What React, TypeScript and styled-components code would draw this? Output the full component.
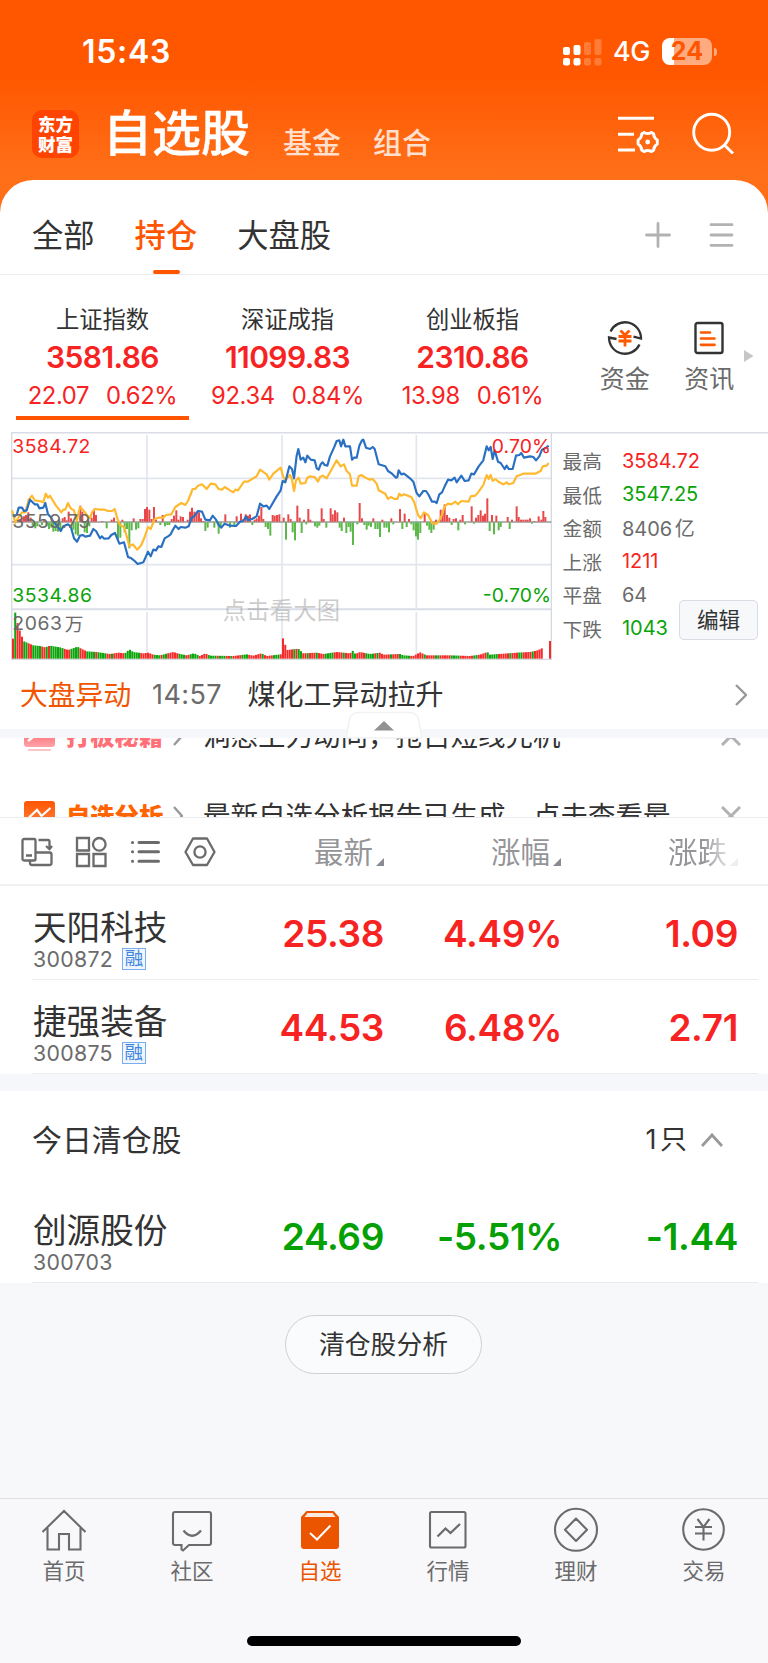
import React from "react";
import styled, { createGlobalStyle } from "styled-components";

const RED = "#f72323";
const GREEN = "#0aa30a";
const ORANGE = "#ff5500";

const GlobalStyle = createGlobalStyle`
  * { box-sizing: border-box; }
  body {
    margin: 0;
    background: #f7f8fa;
    font-family: Inter, "Noto Sans CJK SC", sans-serif;
    color: #333;
    -webkit-font-smoothing: antialiased;
  }
  svg { display: block; flex: none; }
`;

const Screen = styled.div`
  width: 768px;
  height: 1663px;
  display: flex;
  flex-direction: column;
  overflow: hidden;
  background: #f7f8fa;
`;

const Header = styled.header`
  flex: none;
  height: 220px;
  background: linear-gradient(#ff5700 0, #ff5700 76px, #ff6f18 172px, #ff6f18 100%);
`;

const StatusBar = styled.div`
  height: 103px;
  padding: 0 51px 0 82px;
  display: flex;
  align-items: center;
  color: #fff;
`;

const Clock = styled.span`
  flex: 1;
  font-size: 32px;
  line-height: 40px;
  font-weight: 600;
  letter-spacing: 0.7px;
`;

const Network = styled.span`
  margin: 1px 12px 0 11px;
  width: 37px;
  font-size: 27px;
  line-height: 34px;
  font-weight: 500;
  letter-spacing: -0.4px;
`;

const Battery = styled.span`
  display: flex;
  align-items: center;
  justify-content: center;
  width: 50px;
  height: 27px;
  border-radius: 8px;
  background: linear-gradient(90deg, #fff 24%, #ffab80 24%);
  color: ${ORANGE};
  font-size: 25px;
  line-height: 27px;
  font-weight: 700;
`;

const BatteryTip = styled.span`
  width: 3px;
  height: 8px;
  margin: 0 0 0 2px;
  border-radius: 0 4px 4px 0;
  background: #ffab80;
`;

const TitleBar = styled.div`
  height: 77px;
  padding: 0 34px 0 32px;
  display: flex;
  align-items: flex-start;
  color: #fff;
`;

const Logo = styled.div`
  width: 47px;
  height: 48px;
  margin-top: 7px;
  padding-top: 4px;
  border-radius: 10px;
  background: #ff4300;
  font-family: "Noto Sans CJK SC", sans-serif;
  font-weight: 900;
  font-size: 17.5px;
  line-height: 20px;
  text-align: center;
  white-space: pre-line;
`;

const PageTitle = styled.h1`
  margin: 0 0 0 24px;
  width: 149px;
  font-size: 49px;
  line-height: 62px;
  font-weight: 500;
  white-space: nowrap;
  -webkit-text-stroke: 0.4px #fff;
`;

const TitleLink = styled.span`
  margin: 21px 0 0 31px;
  width: 59px;
  font-size: 29px;
  line-height: 40px;
  font-weight: 500;
  color: #ffdfcd;
`;

const HeaderIcons = styled.div`
  margin-left: auto;
  padding-top: 9px;
  display: flex;
  gap: 32px;
`;

const Panel = styled.main`
  flex: none;
  margin-top: -40px;
  background: #fff;
  border-radius: 33px 33px 0 0;
`;

const GroupTabs = styled.nav`
  height: 95px;
  padding: 0 34px 0 32px;
  display: flex;
  align-items: center;
  border-bottom: 1px solid #ececee;
`;

const GroupTab = styled.span<{ $active?: boolean }>`
  position: relative;
  margin: 17px 40px 0 0;
  font-size: 31.3px;
  line-height: 44px;
  font-weight: ${(p) => (p.$active ? 500 : 400)};
  color: ${(p) => (p.$active ? ORANGE : "#333")};
  ${(p) =>
    p.$active &&
    `&::after {
      content: "";
      position: absolute;
      left: 18px;
      top: 56px;
      width: 27px;
      height: 4px;
      border-radius: 2px;
      background: ${ORANGE};
    }`}
`;

const TabTools = styled.div`
  margin: 15px 0 0 auto;
  display: flex;
  align-items: center;
  gap: 38px;
`;

const IndexStrip = styled.section`
  height: 157px;
  padding: 0 0 0 10px;
  display: flex;
`;

const IndexCard = styled.div<{ $active?: boolean }>`
  width: 185px;
  padding: 31px 0 0;
  display: flex;
  flex-direction: column;
  align-items: center;
  &::after {
    content: "";
    width: 173px;
    height: 4px;
    margin-top: 6px;
    background: ${(p) => (p.$active ? ORANGE : "transparent")};
  }
`;

const IndexName = styled.span`
  font-size: 23.3px;
  line-height: 28px;
`;

const IndexValue = styled.span`
  margin-top: 5px;
  font-size: 30px;
  line-height: 36px;
  font-weight: 600;
  letter-spacing: -0.6px;
  color: ${RED};
`;

const IndexChange = styled.span`
  margin-top: 7px;
  display: flex;
  gap: 17px;
  font-size: 23.8px;
  line-height: 28px;
  letter-spacing: -0.4px;
  color: ${RED};
`;

const Shortcuts = styled.div`
  margin-left: 17.5px;
  display: flex;
`;

const Shortcut = styled.div`
  width: 84.5px;
  padding-top: 45px;
  display: flex;
  flex-direction: column;
  align-items: center;
  gap: 8px;
  font-size: 25px;
  line-height: 30px;
  color: #6b6b6b;
`;

const MoreArrow = styled.svg`
  margin: 75px 0 0 -8px;
`;

const MarketPane = styled.section`
  height: 229px;
  padding-left: 11px;
  display: flex;
  background: linear-gradient(#d9dce6, #d9dce6) 11px 0 / 757px 1.5px no-repeat;
`;

const Stats = styled.div`
  padding: 12px 0 0 10.5px;
  width: 117px;
  flex: none;
`;

const StatRow = styled.div<{ $color: string }>`
  display: flex;
  align-items: center;
  height: 33.5px;
  font-size: 19.7px;
  white-space: nowrap;
  color: #6b6b6b;
  & > span:last-child {
    margin-left: 20px;
    font-size: 20px;
    word-spacing: -3px;
    color: ${(p) => p.$color};
  }
`;

const EditButton = styled.button`
  align-self: flex-end;
  margin: 0 10px 21px auto;
  width: 79px;
  height: 40px;
  padding: 0;
  border: 1.5px solid #d9dce2;
  border-radius: 5px;
  background: #f7f8fa;
  font: 400 21.6px/36px Inter, "Noto Sans CJK SC", sans-serif;
  color: #333;
`;

const NewsRow = styled.section`
  height: 68px;
  padding: 0 21px 1px 20px;
  display: flex;
  align-items: center;
  font-size: 28px;
  line-height: 36px;
  white-space: nowrap;
  & > svg { margin-left: auto; }
`;

const NewsTag = styled.span`
  width: 111px;
  font-size: 27.8px;
  color: #f25500;
`;

const NewsTime = styled.span`
  margin-left: 21px;
  width: 95.5px;
  font-size: 27px;
  letter-spacing: 0.4px;
  color: #6b6b6b;
`;

const Divider = styled.div<{ $height: number }>`
  position: relative;
  height: ${(p) => p.$height}px;
  background: #f5f7fa;
`;

const Collapse = styled.svg`
  position: absolute;
  left: 345px;
  top: -18px;
`;

const PromoList = styled.section`
  height: 79px;
  overflow: hidden;
`;

const PromoInner = styled.div`
  margin-top: -42px;
`;

const Promo = styled.div`
  height: 80px;
  padding: 0 27px 0 24px;
  display: flex;
  align-items: center;
  font-size: 27.5px;
  line-height: 36px;
  white-space: nowrap;
  & > svg:last-child { margin-left: auto; }
`;

const PromoTag = styled.span<{ $color: string }>`
  margin: 0 10px 0 11px;
  width: 97px;
  font-size: 24.3px;
  font-weight: 900;
  color: ${(p) => p.$color};
`;

const PromoText = styled.span`
  margin-left: 20px;
`;

const ColumnBar = styled.section`
  height: 69px;
  padding: 1px 0 0 21px;
  display: flex;
  align-items: center;
  border-top: 1px solid #ececee;
  border-bottom: 2px solid #f1f1f3;
`;

const ViewTools = styled.div`
  width: 226px;
  display: flex;
  gap: 22.3px;
  align-items: center;
`;

const ColumnHead = styled.div<{ $width: number; $faded?: boolean }>`
  width: ${(p) => p.$width}px;
  display: flex;
  justify-content: flex-end;
  align-items: flex-end;
  gap: 3px;
  padding-top: 1px;
  font-size: 29.5px;
  line-height: 36px;
  color: #959599;
  & > svg { margin-bottom: 4px; }
  ${(p) => p.$faded && "mask-image: linear-gradient(90deg, #000 80%, rgba(0,0,0,.15) 97%);"}
`;

const StockRow = styled.div`
  height: 94px;
  margin: 0 10px 0 32px;
  padding-right: 20px;
  display: flex;
  border-bottom: 1.5px solid #ececee;
`;

const StockId = styled.div`
  width: 151px;
  padding: 21px 0 0 1px;
`;

const StockName = styled.div`
  font-size: 33.6px;
  line-height: 42px;
  white-space: nowrap;
`;

const StockCode = styled.div`
  display: flex;
  align-items: center;
  height: 20px;
  gap: 9px;
  font-size: 21.3px;
  color: #6b6b6b;
  letter-spacing: 0.3px;
`;

const MarginBadge = styled.span`
  width: 24px;
  height: 22px;
  border: 1.5px solid #78aef0;
  background: #eff6fe;
  color: #3f86dd;
  font-size: 18.5px;
  line-height: 19px;
  text-align: center;
  letter-spacing: 0;
`;

const Figure = styled.span<{ $width: number; $up: boolean }>`
  width: ${(p) => p.$width}px;
  padding-top: 24px;
  font-size: 37px;
  line-height: 48px;
  font-weight: 600;
  text-align: right;
  letter-spacing: -0.35px;
  color: ${(p) => (p.$up ? RED : "#04a004")};
`;

const SectionHead = styled.div`
  height: 98px;
  padding: 0 45px 0 32px;
  display: flex;
  align-items: center;
  justify-content: space-between;
  font-size: 29.9px;
  line-height: 40px;
`;

const SectionCount = styled.span`
  display: flex;
  align-items: center;
  gap: 14px;
  font-size: 27px;
  word-spacing: -4px;
`;

const Filler = styled.div`
  flex: 1;
  padding-top: 32px;
  display: flex;
  justify-content: center;
  align-items: flex-start;
`;

const AnalysisButton = styled.button`
  width: 197px;
  height: 59px;
  margin-right: 1px;
  padding: 0;
  border: 1.5px solid #cfd0d4;
  border-radius: 30px;
  background: #fafbfc;
  font: 400 25.8px/56px Inter, "Noto Sans CJK SC", sans-serif;
  color: #333;
`;

const TabBar = styled.nav`
  flex: none;
  height: 165px;
  border-top: 1.5px solid #dfe0e3;
  background: #f8f8fb;
  display: flex;
  flex-direction: column;
  justify-content: space-between;
  align-items: center;
`;

const TabItems = styled.div`
  width: 100%;
  display: flex;
`;

const TabItem = styled.div<{ $active?: boolean }>`
  flex: 1;
  padding-top: 10px;
  display: flex;
  flex-direction: column;
  align-items: center;
  gap: 1px;
  font-size: 21.5px;
  line-height: 30px;
  color: ${(p) => (p.$active ? "#ec5500" : "#6b6b6b")};
  & > svg { overflow: visible; }
`;

const HomeIndicator = styled.div`
  width: 274px;
  height: 10px;
  margin-bottom: 17px;
  border-radius: 5px;
  background: #000;
`;

/* Intraday series, in thirds of a pixel from the pane's origin. */
const INDEX_LINE =
  "38,272 50,270 56,248 66,248 72,258 80,256 90,224 104,238 112,238 118,250 130,248 136,234 144,268 152,276 160,290 170,300 182,318 190,304 204,298 212,304 222,340 231,350 240,332 248,330 256,335 270,332 280,312 288,318 300,340 306,334 312,341 326,340 334,330 345,324 358,356 372,352 384,396 394,400 404,408 413,417 430,412 444,380 452,394 460,374 468,376 475,364 484,366 494,340 504,334 512,328 518,316 526,302 536,312 542,306 556,308 566,304 574,280 584,272 594,258 606,260 616,284 630,286 638,272 648,284 656,300 664,308 674,296 690,302 708,303 720,290 730,288 738,274 744,286 756,282 770,274 780,236 790,244 800,242 808,252 830,214 842,196 848,168 856,172 868,124 876,132 882,160 890,92 895,72 902,104 910,98 916,112 922,92 932,104 944,106 950,130 956,134 962,118 968,112 974,120 982,122 990,94 1002,68 1010,48 1018,46 1023,64 1030,44 1036,64 1050,64 1056,104 1062,98 1070,98 1078,62 1086,46 1090,44 1098,68 1110,72 1118,66 1124,72 1136,118 1156,124 1164,138 1176,146 1188,158 1192,156 1196,136 1204,148 1212,146 1230,160 1240,170 1250,204 1258,214 1270,198 1278,198 1286,210 1296,230 1304,230 1310,234 1318,208 1326,202 1334,184 1344,164 1354,166 1364,158 1370,172 1384,152 1394,168 1406,166 1414,146 1422,148 1436,124 1450,106 1460,64 1466,76 1472,66 1478,102 1484,76 1494,110 1502,114 1514,132 1520,122 1526,132 1538,132 1548,92 1558,90 1564,84 1572,98 1590,94 1600,96 1608,106 1618,94 1626,74 1636,70 1646,62";

const LEAD_LINE =
  "36,256 46,294 56,276 66,262 76,262 86,224 96,212 104,226 118,228 130,232 137,206 144,218 150,212 158,226 168,242 184,262 190,254 196,254 204,234 212,250 222,256 230,288 240,246 250,256 258,266 270,280 276,262 284,252 300,254 314,254 324,258 336,258 344,252 352,280 360,300 372,306 382,340 388,364 398,358 412,374 424,360 434,336 444,306 452,312 464,282 476,278 490,278 498,270 514,268 526,246 544,234 556,240 564,228 578,192 586,192 594,182 606,178 620,192 632,176 646,178 656,192 666,194 674,186 690,196 700,202 706,194 714,196 732,170 744,170 756,162 770,154 780,134 800,148 808,164 820,146 842,128 850,156 856,166 870,150 876,164 882,198 888,166 896,158 902,176 916,174 922,158 930,154 944,156 954,170 960,156 968,152 980,160 990,142 1002,120 1010,106 1022,124 1032,118 1040,138 1050,148 1056,182 1070,182 1076,154 1084,150 1100,160 1110,164 1118,162 1130,176 1136,196 1156,206 1164,222 1172,216 1184,222 1192,222 1198,206 1204,212 1212,208 1234,216 1242,230 1254,270 1262,280 1272,262 1284,270 1298,296 1310,296 1322,280 1334,244 1344,236 1354,238 1366,230 1374,238 1384,228 1406,230 1412,214 1426,212 1436,200 1450,180 1460,150 1466,162 1472,150 1478,168 1486,162 1498,172 1510,178 1520,172 1526,178 1540,174 1550,154 1570,146 1606,146 1622,138 1628,124 1640,122 1646,114";

const MOMENTUM: number[][] = [
  [58, 8], [65, 12], [72, 16], [78, 20], [85, 28], [92, 12], [98, -10], [106, -18], [112, -12], [126, -8], [133, 8],
  [140, -12], [147, -20], [154, -16], [160, -28], [167, -26], [174, -28], [181, -20], [188, 10], [194, 14], [200, 4],
  [206, 30], [213, 10], [220, -22], [227, -36], [234, -40], [241, 48], [247, 30], [254, -30], [261, -32], [268, -12],
  [275, 12], [282, 34], [288, 20], [307, 2], [320, -18], [335, 6], [342, 12], [354, -50], [361, -46], [367, 6],
  [374, -30], [381, -20], [388, -78], [395, -24], [401, 10], [408, -22], [415, -18], [421, 8], [428, 8], [435, 38],
  [441, 44], [448, 36], [455, 8], [462, 44], [468, 6], [481, -8], [488, 20], [495, -12], [502, -8], [508, -8],
  [515, 8], [522, 18], [529, 34], [535, 6], [542, 16], [549, 14], [563, 6], [570, 30], [576, 42], [583, 30],
  [590, 28], [597, 28], [603, 10], [610, 2], [616, -26], [623, -16], [643, -16], [656, -34], [662, -14], [676, 22],
  [690, -16], [703, -14], [710, 16], [723, 24], [730, 8], [737, 22], [744, 18], [750, 22], [757, -8], [764, 6],
  [770, 10], [777, 18], [784, 44], [790, 8], [797, -14], [804, -20], [811, -40], [818, 20], [824, 18], [831, 20],
  [838, 22], [851, 12], [858, -52], [865, 22], [872, 8], [878, -30], [885, -54], [892, 48], [899, 12], [905, -32],
  [912, 6], [919, -6], [925, 38], [931, 6], [945, -12], [952, -16], [958, -10], [965, 40], [971, 8], [979, -16],
  [992, 40], [998, 22], [1005, 34], [1012, 28], [1019, -16], [1025, -26], [1032, 12], [1039, -32], [1046, -14],
  [1052, -28], [1059, -68], [1072, -6], [1079, 56], [1086, 10], [1093, -8], [1100, -22], [1106, -10], [1113, -14],
  [1120, 10], [1126, -20], [1133, -20], [1140, -44], [1147, 6], [1153, -16], [1160, -16], [1167, -30], [1174, 10],
  [1180, -6], [1200, 38], [1207, -20], [1214, 24], [1220, -14], [1227, 8], [1234, -6], [1241, -24], [1248, -42],
  [1254, -52], [1261, -32], [1274, 26], [1281, -10], [1288, -22], [1294, -32], [1301, -22], [1308, 6], [1322, 36],
  [1328, 26], [1334, 52], [1341, 20], [1348, 12], [1355, -8], [1361, 8], [1368, 10], [1375, -24], [1381, 6],
  [1388, 20], [1395, -6], [1415, 46], [1422, -4], [1428, 12], [1435, 20], [1442, 34], [1449, 18], [1455, 24],
  [1462, 70], [1469, -26], [1476, 20], [1482, -36], [1489, 18], [1496, -24], [1502, -14], [1523, 14], [1529, -20],
  [1536, 6], [1550, 46], [1556, 14], [1563, 6], [1570, 6], [1577, 6], [1583, 6], [1590, 10], [1596, -4], [1603, 2],
  [1616, 16], [1624, 6], [1630, 32], [1636, 14],
];

/* Volume envelope as [x, height]; colours as run lengths, rising first. */
const VOLUME: number[][] = [
  [39, 60], [46, 141], [53, 104], [60, 82], [66, 66], [72, 52], [86, 46], [100, 40], [120, 38], [135, 34], [150, 39],
  [180, 34], [205, 26], [232, 36], [260, 22], [290, 20], [330, 14], [355, 18], [375, 16], [388, 28], [400, 20],
  [430, 16], [445, 18], [460, 12], [480, 10], [520, 20], [540, 14], [560, 10], [582, 16], [600, 8], [616, 16],
  [630, 9], [700, 8], [740, 13], [760, 9], [784, 16], [800, 8], [843, 13], [846, 16], [850, 76], [856, 40], [862, 26],
  [895, 30], [910, 16], [950, 18], [970, 14], [1010, 20], [1050, 16], [1059, 24], [1066, 14], [1080, 20], [1110, 14],
  [1140, 18], [1150, 12], [1200, 14], [1210, 10], [1240, 8], [1260, 19], [1280, 10], [1350, 10], [1410, 8], [1440, 12],
  [1462, 20], [1470, 12], [1550, 18], [1590, 20], [1610, 24], [1630, 33],
];
const VOLUME_RUNS = [
  1, 1, 3, 2, 2, 4, 2, 1, 1, 6, 3, 4, 3, 4, 1, 4, 2, 1, 5, 7, 6, 3, 1, 2, 5, 3, 2, 4, 4, 4, 1, 3, 2, 1, 4, 3, 6, 1,
  4, 3, 6, 1, 1, 2, 2, 1, 3, 1, 3, 4, 4, 1, 3, 2, 4, 4, 1, 1, 5, 1, 3, 5, 6, 1, 4, 2, 5, 4, 6, 2, 4, 5, 5, 1, 3, 2, 4,
  1, 6, 2, 3, 1, 2, 3, 6, 1, 40,
];

function volumeAt(x: number) {
  const next = VOLUME.findIndex((p) => p[0] >= x);
  if (next <= 0) return VOLUME[next === 0 ? 0 : VOLUME.length - 1][1];
  const [x0, h0] = VOLUME[next - 1];
  const [x1, h1] = VOLUME[next];
  return h0 + ((h1 - h0) * (x - x0)) / (x1 - x0);
}

const volumeBars: { x: number; h: number; up: boolean }[] = [];
{
  let run = 0;
  let left = VOLUME_RUNS[0];
  for (let i = 0; i < 236; i++) {
    const x = 39 + i * 6.75;
    if (left === 0) {
      run += 1;
      left = VOLUME_RUNS[run] ?? 99;
    }
    volumeBars.push({ x, h: volumeAt(x), up: run % 2 === 0 });
    left -= 1;
  }
  volumeBars.push({ x: 1650, h: 53, up: true });
}

const IntradayChart = () => (
  <svg width="541" height="228" viewBox="33 21 1623 684" fontFamily='Inter, "Noto Sans CJK SC", sans-serif'>
    <g fill="none" stroke="#e2e5ee" strokeWidth="5">
      <path d="M36 160H1654M36 419H1654" />
      <path d="M441 30V548M846 30V548M1249 30V548M441 560V700M846 560V700M1249 560V700" />
      <path d="M36 553H1654" stroke="#d9dde6" strokeWidth="6" />
      <path d="M35 23V703H1654V23" stroke="#d5d9e0" strokeWidth="4" />
    </g>
    <path d="M36 291H1654" stroke="#999" strokeWidth="4" />
    {MOMENTUM.map(([x, v]) => (
      <rect
        key={x}
        x={x - 3}
        y={v > 0 ? 290 - v : 292}
        width="6"
        height={Math.abs(v)}
        fill={v > 0 ? "#e8484a" : "#5cb848"}
      />
    ))}
    <g fill="none" strokeWidth="6.5" strokeLinejoin="round">
      <polyline points={LEAD_LINE} stroke="#ffb92e" />
      <polyline points={INDEX_LINE} stroke="#2a70c2" />
    </g>
    {volumeBars.map((b) => (
      <rect key={b.x} x={b.x - 3} y={701 - b.h} width="6" height={b.h} fill={b.up ? "#f72a2a" : "#0ca50c"} />
    ))}
    <g fontSize="58">
      <text x="37" y="85" fill={RED} textLength="234">3584.72</text>
      <text x="37" y="308" fill="#6b6b6b" textLength="234">3559.79</text>
      <text x="37" y="532" fill={GREEN} textLength="239">3534.86</text>
      <text x="37" y="616" fill="#6b6b6b" textLength="149">2063</text>
      <text x="194" y="618" fill="#6b6b6b" fontSize="56">万</text>
      <text x="1475" y="85" fill={RED} textLength="178">0.70%</text>
      <text x="1448" y="532" fill={GREEN} textLength="205">-0.70%</text>
      <text x="668" y="582" fill="#999" fillOpacity=".5" fontSize="70" textLength="352">点击看大图</text>
    </g>
  </svg>
);

const indices = [
  { name: "上证指数", value: "3581.86", diff: "22.07", pct: "0.62%" },
  { name: "深证成指", value: "11099.83", diff: "92.34", pct: "0.84%" },
  { name: "创业板指", value: "2310.86", diff: "13.98", pct: "0.61%" },
];

const stats = [
  { label: "最高", value: "3584.72", color: RED },
  { label: "最低", value: "3547.25", color: GREEN },
  { label: "金额", value: "8406 亿", color: "#6b6b6b" },
  { label: "上涨", value: "1211", color: RED },
  { label: "平盘", value: "64", color: "#6b6b6b" },
  { label: "下跌", value: "1043", color: GREEN },
];

const Signal = () => (
  <svg width="39" height="28" viewBox="0 0 39 28" fill="#fff">
    <rect x="0" y="9" width="7" height="8" rx="2" />
    <rect x="0" y="20" width="7" height="7.5" rx="2.2" />
    <rect x="10.5" y="7" width="7" height="10" rx="2" />
    <rect x="10.5" y="20" width="7" height="7.5" rx="2.2" />
    <g opacity=".22">
      <rect x="21" y="4" width="7" height="13" rx="2" />
      <rect x="21" y="20" width="7" height="7.5" rx="2.2" />
      <rect x="31.5" y="1" width="7" height="16" rx="2" />
      <rect x="31.5" y="20" width="7" height="7.5" rx="2.2" />
    </g>
  </svg>
);

const ListSettingsIcon = () => (
  <svg width="44" height="42" viewBox="0 0 44 42" fill="none" stroke="#fff" strokeWidth="2.9">
    <path d="M2 6.3H38M2 22.3H18M2 38H19" />
    <path
      strokeLinejoin="round"
      d="M28.1 20.4Q31.7 22.6 35.3 20.4L37.6 21.8Q37.7 26 41.3 28.1V31.9Q37.7 34 37.6 38.2L35.3 39.6Q31.7 37.4 28.1 39.6L25.8 38.2Q25.7 34 22.1 31.9V28.1Q25.7 26 25.8 21.8Z"
    />
    <circle cx="31.7" cy="30" r="2.4" fill="#fff" stroke="none" />
  </svg>
);

const SearchIcon = () => (
  <svg width="42" height="42" viewBox="0 0 42 42" fill="none" stroke="#fff" strokeWidth="2.9">
    <circle cx="19.7" cy="20.3" r="18" />
    <path d="M32 32.5L41 41.5" />
  </svg>
);

const FundIcon = () => (
  <svg width="36" height="36" viewBox="0 0 36 36" fill="none" stroke="#333" strokeWidth="2.3">
    <path d="M3.5 11.5A16 16 0 0 1 34 18.5L26.5 16.7" />
    <path d="M32.5 24.5A16 16 0 0 1 2 17.5L9.5 19" />
    <path d="M13.5 10.5L18 15L22.5 10.5M11.5 16.5H24.5M11.5 21H24.5M18 15V26.5" stroke="#ff5a00" strokeWidth="2.8" />
  </svg>
);

const InfoIcon = () => (
  <svg width="36" height="36" viewBox="0 0 36 36" fill="none" stroke="#333" strokeWidth="2.4">
    <rect x="4.5" y="3" width="27" height="30" rx="2" />
    <path d="M10 12.5H19M10 18.5H23.5M10 24.8H23.5" stroke="#ff5a00" strokeWidth="2.7" strokeLinecap="round" />
  </svg>
);

const Cross = () => (
  <svg width="20" height="20" viewBox="0 0 20 20" stroke="#b2b2b4" strokeWidth="3" fill="none">
    <path d="M1 1L19 19M19 1L1 19" />
  </svg>
);

const SmallArrow = () => (
  <svg width="10" height="20" viewBox="0 0 10 20" stroke="#999" strokeWidth="2.4" fill="none">
    <path d="M1 1L9 10L1 19" />
  </svg>
);

const SortMark = () => (
  <svg width="8" height="8" viewBox="0 0 8 8" fill="#8a8a92">
    <path d="M8 0V8H0Z" />
  </svg>
);

const Stock = (p: { name: string; code: string; margin?: boolean; price: string; pct: string; diff: string; up: boolean }) => (
  <StockRow>
    <StockId>
      <StockName>{p.name}</StockName>
      <StockCode>
        {p.code}
        {p.margin && <MarginBadge>融</MarginBadge>}
      </StockCode>
    </StockId>
    <Figure $width={201} $up={p.up}>{p.price}</Figure>
    <Figure $width={178} $up={p.up}>{p.pct}</Figure>
    <Figure $width={176} $up={p.up}>{p.diff}</Figure>
  </StockRow>
);

const line = { fill: "none", stroke: "#6b6b6b", strokeWidth: 2.1 } as const;

const tabs = [
  {
    label: "首页",
    icon: (
      <svg width="46" height="46" viewBox="0 0 46 46" {...line}>
        <path d="M1.5 23L23 2L44.5 23M6.5 19V40.5H18V25H28V40.5H39.5V19" />
      </svg>
    ),
  },
  {
    label: "社区",
    icon: (
      <svg width="46" height="46" viewBox="0 0 46 46" {...line}>
        <path d="M6 3H40Q42 3 42 5V34Q42 36 40 36H20L14 41.5L12.5 40.5V36H6Q4 36 4 34V5Q4 3 6 3Z" />
        <path d="M14.5 21.5Q23 32 32 21.5" strokeWidth="2.3" />
      </svg>
    ),
  },
  {
    label: "自选",
    active: true,
    icon: (
      <svg width="46" height="46" viewBox="0 0 46 46" fill="none">
        <path d="M9.5 2H36.5L42 8V37Q42 40 39 40H7Q4 40 4 37V8Z" fill="#ec5500" />
        <path d="M10.5 4H35.5L38.5 8H7.5Z" fill="#fbe9df" />
        <path d="M13 24L20 30.5L33.5 16.5" stroke="#fff" strokeWidth="2" />
      </svg>
    ),
  },
  {
    label: "行情",
    icon: (
      <svg width="46" height="46" viewBox="0 0 46 46" {...line}>
        <rect x="5" y="3" width="35.5" height="35.5" rx="1.5" />
        <path d="M12.5 27.5L20.5 19.5L25.5 24L35 15" strokeWidth="2.3" />
      </svg>
    ),
  },
  {
    label: "理财",
    icon: (
      <svg width="46" height="46" viewBox="0 0 46 46" {...line}>
        <circle cx="23" cy="20.8" r="21" />
        <path d="M23 9.5L34 20.8L23 32L12 20.8Z" strokeLinejoin="round" />
      </svg>
    ),
  },
  {
    label: "交易",
    icon: (
      <svg width="46" height="46" viewBox="0 0 46 46" {...line}>
        <circle cx="22.5" cy="20.5" r="20.3" />
        <path d="M16.5 10L22.5 18L28.5 10M14 18H31M14 24.5H31M22.5 18V31.5" />
      </svg>
    ),
  },
];

export default function App() {
  return (
    <Screen>
      <GlobalStyle />
      <Header>
        <StatusBar>
          <Clock>15:43</Clock>
          <Signal />
          <Network>4G</Network>
          <Battery>24</Battery>
          <BatteryTip />
        </StatusBar>
        <TitleBar>
          <Logo>{"东方\n财富"}</Logo>
          <PageTitle>自选股</PageTitle>
          <TitleLink>基金</TitleLink>
          <TitleLink>组合</TitleLink>
          <HeaderIcons>
            <ListSettingsIcon />
            <SearchIcon />
          </HeaderIcons>
        </TitleBar>
      </Header>
      <Panel>
        <GroupTabs>
          <GroupTab>全部</GroupTab>
          <GroupTab $active>持仓</GroupTab>
          <GroupTab>大盘股</GroupTab>
          <TabTools>
            <svg width="26" height="26" viewBox="0 0 26 26" stroke="#b2b2b4" strokeWidth="2.8" strokeLinecap="round">
              <path d="M13 1.5V24.5M1.5 13H24.5" />
            </svg>
            <svg width="25" height="26" viewBox="0 0 25 26" stroke="#b2b2b4" strokeWidth="2.8" strokeLinecap="round">
              <path d="M2 2.7H23M2 13H23M2 23.3H23" />
            </svg>
          </TabTools>
        </GroupTabs>
        <IndexStrip>
          {indices.map((it, i) => (
            <IndexCard key={it.name} $active={i === 0}>
              <IndexName>{it.name}</IndexName>
              <IndexValue>{it.value}</IndexValue>
              <IndexChange>
                <span>{it.diff}</span>
                <span>{it.pct}</span>
              </IndexChange>
            </IndexCard>
          ))}
          <Shortcuts>
            <Shortcut>
              <FundIcon />
              资金
            </Shortcut>
            <Shortcut>
              <InfoIcon />
              资讯
            </Shortcut>
            <MoreArrow width="10" height="12" viewBox="0 0 10 12" fill="#c6c6c8">
              <path d="M0 0L9.5 6L0 12Z" />
            </MoreArrow>
          </Shortcuts>
        </IndexStrip>
        <MarketPane>
          <IntradayChart />
          <Stats>
            {stats.map((s) => (
              <StatRow key={s.label} $color={s.color}>
                <span>{s.label}</span>
                <span>{s.value}</span>
              </StatRow>
            ))}
          </Stats>
          <EditButton>编辑</EditButton>
        </MarketPane>
        <NewsRow>
          <NewsTag>大盘异动</NewsTag>
          <NewsTime>14:57</NewsTime>
          <span>煤化工异动拉升</span>
          <svg width="12" height="22" viewBox="0 0 12 22" stroke="#999" strokeWidth="2.4" fill="none">
            <path d="M1 1L11 11L1 21" />
          </svg>
        </NewsRow>
        <Divider $height={9}>
          <Collapse width="78" height="28" viewBox="0 0 78 28">
            <path d="M1.5 27C4 10 3 1.5 14 1.5H64C75 1.5 74 10 76.5 27Z" fill="#fff" stroke="#f1f2f4" strokeWidth="1.5" />
            <path d="M29 19.5L39 10L49 19.5Z" fill="#929294" />
          </Collapse>
        </Divider>
        <PromoList>
          <PromoInner>
            <Promo>
              <svg width="31" height="32" viewBox="0 0 31 32">
                <defs>
                  <linearGradient id="pinkFade" x1="0" y1="0" x2="0" y2="1">
                    <stop offset=".5" stopColor="#ff6f78" />
                    <stop offset="1" stopColor="#ffa5aa" />
                  </linearGradient>
                </defs>
                <rect width="31" height="27" rx="3" fill="url(#pinkFade)" />
                <path d="M4 21L13 14L22 4" stroke="#fff" strokeWidth="2.5" fill="none" />
                <path d="M4 30H27" stroke="#ffc2c5" strokeWidth="2" />
              </svg>
              <PromoTag $color="#ff6f78">打板秘籍</PromoTag>
              <SmallArrow />
              <PromoText>洞悉主力动向，抢占短线先机</PromoText>
              <Cross />
            </Promo>
            <Promo>
              <svg width="31" height="31" viewBox="0 0 31 31">
                <defs>
                  <linearGradient id="orangeFade" x1="0" y1="0" x2="0" y2="1">
                    <stop offset="0" stopColor="#ff5500" />
                    <stop offset="1" stopColor="#ff8a50" />
                  </linearGradient>
                </defs>
                <rect width="31" height="31" rx="3" fill="url(#orangeFade)" />
                <path d="M5 16.5L13 9L17.5 15L26.5 7" stroke="#fff" strokeWidth="2.2" fill="none" />
              </svg>
              <PromoTag $color="#ff6400">自选分析</PromoTag>
              <SmallArrow />
              <PromoText>最新自选分析报告已生成，点击查看最</PromoText>
              <Cross />
            </Promo>
          </PromoInner>
        </PromoList>
        <ColumnBar>
          <ViewTools>
            <svg width="32" height="32" viewBox="0 0 32 32" fill="none" stroke="#6b6b6b" strokeWidth="2.3">
              <rect x="1.5" y="3" width="13" height="21.5" rx="1.5" />
              <path d="M5 19.5H11M9 24.5V27Q9 29 11 29H28.5Q30.5 29 30.5 27V18.5Q30.5 16.5 28.5 16.5H15M17.5 4H27Q28.5 4 28.5 5.5V12M25 10L28.5 13L31 10" />
            </svg>
            <svg width="32" height="32" viewBox="0 0 32 32" fill="none" stroke="#6b6b6b" strokeWidth="2.3">
              <path d="M2 2H14V14.5H2ZM2 18H14V30H2ZM18.5 18H30.5V30H18.5Z" />
              <circle cx="24.3" cy="8.3" r="6.3" />
            </svg>
            <svg width="32" height="32" viewBox="0 0 32 32" fill="none" stroke="#6b6b6b" strokeWidth="3" strokeLinecap="round">
              <path d="M9 6.5H28.5M9 15.8H28.5M9 25.2H28.500M2.500 6.5H2.6M2.5 15.8H2.6M2.5 25.2H2.6" />
            </svg>
            <svg width="32" height="32" viewBox="0 0 32 32" fill="none" stroke="#6b6b6b" strokeWidth="2.3">
              <path d="M9 2.5H23L30.5 16L23 29H9L1.5 16Z" strokeLinejoin="round" />
              <circle cx="16" cy="16" r="5.6" />
            </svg>
          </ViewTools>
          <ColumnHead $width={137}>最新<SortMark /></ColumnHead>
          <ColumnHead $width={177}>涨幅<SortMark /></ColumnHead>
          <ColumnHead $width={177} $faded>涨跌<SortMark /></ColumnHead>
        </ColumnBar>
        <Stock name="天阳科技" code="300872" margin price="25.38" pct="4.49%" diff="1.09" up />
        <Stock name="捷强装备" code="300875" margin price="44.53" pct="6.48%" diff="2.71" up />
        <Divider $height={17} />
        <SectionHead>
          <span>今日清仓股</span>
          <SectionCount>
            1 只
            <svg width="22" height="14" viewBox="0 0 22 14" stroke="#999" strokeWidth="2.9" fill="none">
              <path d="M1 13L11 2L21 13" />
            </svg>
          </SectionCount>
        </SectionHead>
        <Stock name="创源股份" code="300703" price="24.69" pct="-5.51%" diff="-1.44" up={false} />
      </Panel>
      <Filler>
        <AnalysisButton>清仓股分析</AnalysisButton>
      </Filler>
      <TabBar>
        <TabItems>
          {tabs.map((t) => (
            <TabItem key={t.label} $active={t.active}>
              {t.icon}
              {t.label}
            </TabItem>
          ))}
        </TabItems>
        <HomeIndicator />
      </TabBar>
    </Screen>
  );
}
